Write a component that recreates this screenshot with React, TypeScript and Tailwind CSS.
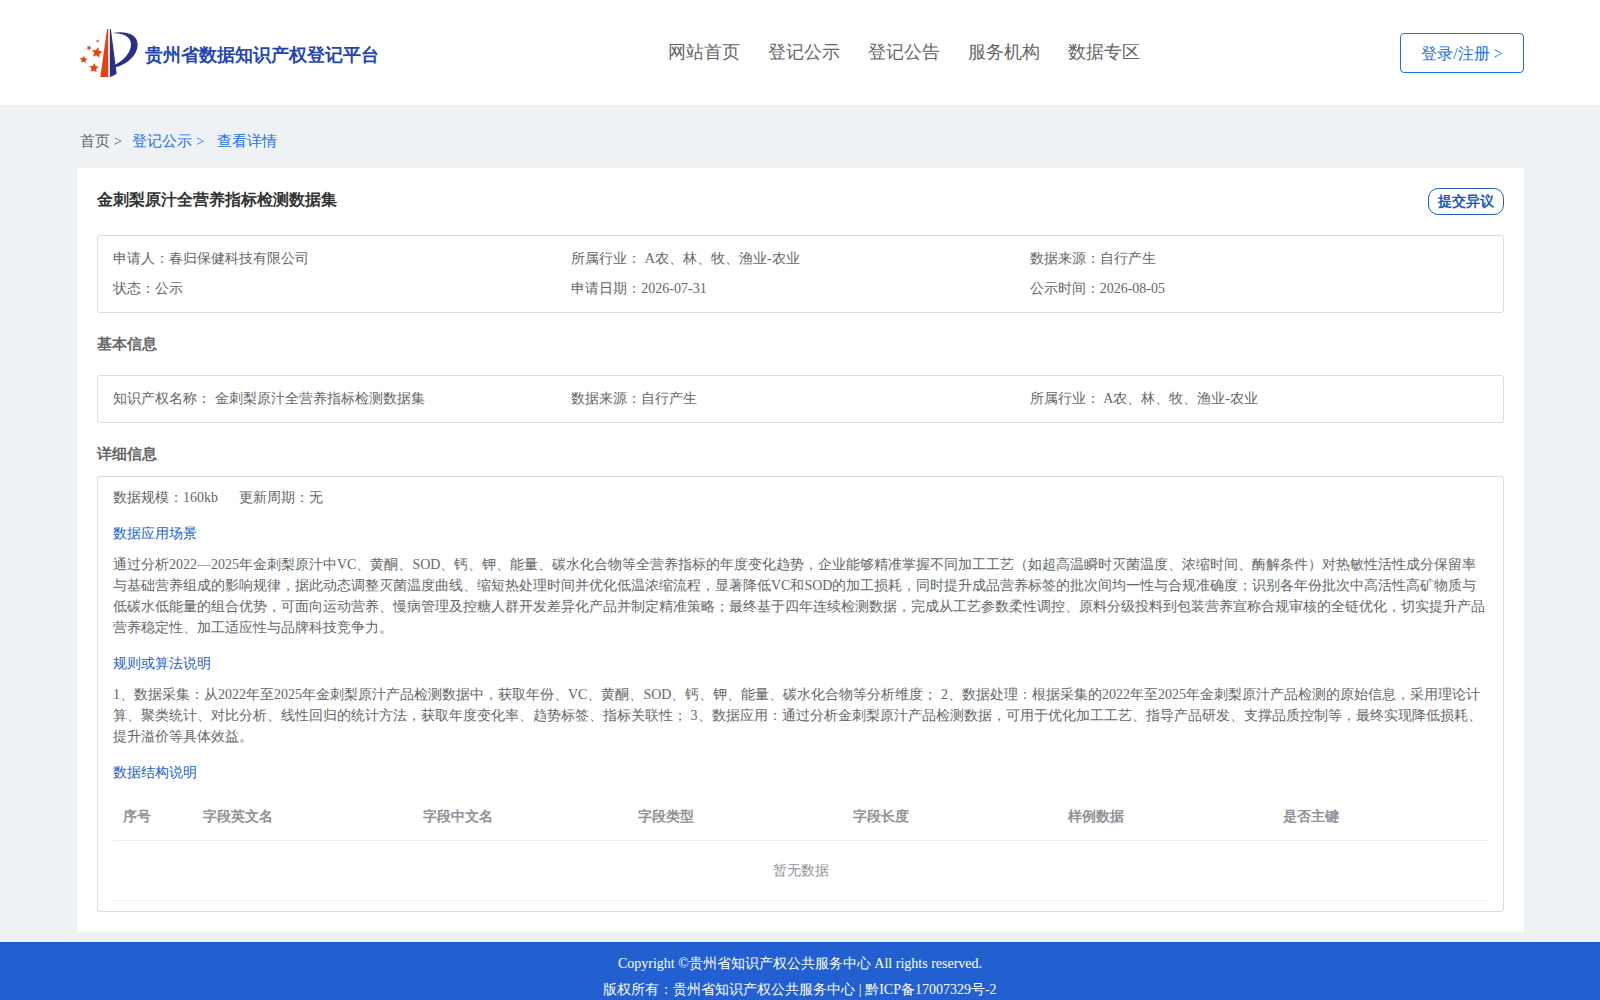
const FONT = "font-['Liberation_Serif',serif]";

const navItems = ['网站首页', '登记公示', '登记公告', '服务机构', '数据专区'];

const summary = [
  '申请人：春归保健科技有限公司',
  '所属行业： A农、林、牧、渔业-农业',
  '数据来源：自行产生',
  '状态：公示',
  '申请日期：2026-07-31',
  '公示时间：2026-08-05',
];

const basics = [
  '知识产权名称： 金刺梨原汁全营养指标检测数据集',
  '数据来源：自行产生',
  '所属行业： A农、林、牧、渔业-农业',
];

const columns = ['序号', '字段英文名', '字段中文名', '字段类型', '字段长度', '样例数据', '是否主键'];

function star(cx: number, cy: number, r: number, turn: number) {
  return Array.from({ length: 10 }, (_, i) => {
    const radius = i % 2 ? r * 0.48 : r;
    const a = ((i * 36 - 90 + turn) * Math.PI) / 180;
    return `${(cx + radius * Math.cos(a)).toFixed(1)},${(cy + radius * Math.sin(a)).toFixed(1)}`;
  }).join(' ');
}

function Logo() {
  return (
    <svg viewBox="30 24 174 150" className="h-[50px] w-[58px] shrink-0" aria-hidden="true">
      <g fill="#e64312">
        <path d="M111 27 L114.500 27 L114.500 171 L91 171 Z" />
        <polygon points={star(81, 98, 17, 12)} />
        <polygon points={star(72, 144, 15, 5)} />
        <polygon points={star(41, 119, 12, 5)} />
        <polygon points={star(57, 84, 8, 20)} />
        <polygon points={star(83, 63, 5, 20)} />
      </g>
      <g fill="#2a3088">
        <path d="M119.500 27 L122.500 27 L140 161 Q130 168 119.500 171 Z" />
        <path d="M127 39 C165 31 204 42 203 74 C202 108 168 134 136 142 L135 134 C160 122 184 98 183 72 C182 49 158 39 127 39 Z" />
      </g>
    </svg>
  );
}

function InfoBox({ items }: { items: string[] }) {
  return (
    <ul className="grid grid-cols-3 rounded-[3px] border border-[#dcdcdc] px-[15px] py-2 text-sm leading-[30px]">
      {items.map((item) => (
        <li key={item}>{item}</li>
      ))}
    </ul>
  );
}

function SubHeading({ children }: { children: string }) {
  return <h3 className="mt-[15px] mb-2.5 text-[#2260d2]">{children}</h3>;
}

export default function App() {
  return (
    <div className={`min-h-screen bg-[#eef2f5] text-[#666] ${FONT}`}>
      <header className="bg-white">
        <div className="mr-[76px] ml-[77px] flex h-[105px] items-center justify-between">
          <a href="#" className="flex w-[331px] items-center gap-[7px] pl-[3px] text-lg font-bold text-[#2446b4]">
            <Logo />
            <span className="whitespace-nowrap pt-1">贵州省数据知识产权登记平台</span>
          </a>
          <nav className="flex gap-7 pb-0.5 text-lg">
            {navItems.map((item) => (
              <a key={item} href="#">{item}</a>
            ))}
          </nav>
          <button type="button" className="h-10 w-[124px] rounded-[4px] border border-[#1a70ef] pt-0.5 text-base text-[#1a70ef]">
            登录/注册 &gt;
          </button>
        </div>
      </header>

      <main className="mr-[76px] ml-[77px]">
        <nav aria-label="breadcrumb" className="flex h-[63px] items-center pt-2.5 pl-[3px] text-[15px]">
          <a href="#" className="mr-2.5">首页 &gt;</a>
          <a href="#" className="mr-[13px] text-[#1a70ef]">登记公示 &gt;</a>
          <span className="text-[#1a70ef]">查看详情</span>
        </nav>

        <section className="bg-white p-5">
          <div className="mb-5 flex items-start justify-between">
            <h1 className="text-base leading-6 font-bold text-[#333]">金刺梨原汁全营养指标检测数据集</h1>
            <button type="button" className="h-[27px] rounded-[10px] border border-[#2260c4] px-[9px] text-sm font-bold text-[#2058be]">
              提交异议
            </button>
          </div>

          <InfoBox items={summary} />
          <h2 className="py-5 text-[15px] leading-[22px] font-bold">基本信息</h2>
          <InfoBox items={basics} />
          <h2 className="pt-5 pb-2.5 text-[15px] leading-[23px] font-bold">详细信息</h2>

          <div className="rounded-[3px] border border-[#dcdcdc] px-[15px] py-2.5 text-sm leading-[21px]">
            <p className="flex gap-[21px]">
              <span>数据规模：160kb</span>
              <span>更新周期：无</span>
            </p>
            <SubHeading>数据应用场景</SubHeading>
            <p>
              通过分析2022—2025年金刺梨原汁中VC、黄酮、SOD、钙、钾、能量、碳水化合物等全营养指标的年度变化趋势，企业能够精准掌握不同加工工艺（如超高温瞬时灭菌温度、浓缩时间、酶解条件）对热敏性活性成分保留率与基础营养组成的影响规律，据此动态调整灭菌温度曲线、缩短热处理时间并优化低温浓缩流程，显著降低VC和SOD的加工损耗，同时提升成品营养标签的批次间均一性与合规准确度；识别各年份批次中高活性高矿物质与低碳水低能量的组合优势，可面向运动营养、慢病管理及控糖人群开发差异化产品并制定精准策略；最终基于四年连续检测数据，完成从工艺参数柔性调控、原料分级投料到包装营养宣称合规审核的全链优化，切实提升产品营养稳定性、加工适应性与品牌科技竞争力。
            </p>
            <SubHeading>规则或算法说明</SubHeading>
            <p>
              1、数据采集：从2022年至2025年金刺梨原汁产品检测数据中，获取年份、VC、黄酮、SOD、钙、钾、能量、碳水化合物等分析维度； 2、数据处理：根据采集的2022年至2025年金刺梨原汁产品检测的原始信息，采用理论计算、聚类统计、对比分析、线性回归的统计方法，获取年度变化率、趋势标签、指标关联性； 3、数据应用：通过分析金刺梨原汁产品检测数据，可用于优化加工工艺、指导产品研发、支撑品质控制等，最终实现降低损耗、提升溢价等具体效益。
            </p>
            <SubHeading>数据结构说明</SubHeading>
            <table className="w-full table-fixed text-left text-[#909399]">
              <colgroup>
                <col className="w-20" />
                <col className="w-[220px]" />
                <col />
                <col />
                <col />
                <col />
                <col />
              </colgroup>
              <thead>
                <tr className="h-[47px] border-b border-[#ebeef5]">
                  {columns.map((column) => (
                    <th key={column} scope="col" className="px-2.5 font-bold">{column}</th>
                  ))}
                </tr>
              </thead>
              <tbody>
                <tr className="h-[60px] border-b border-[#ebeef5]">
                  <td colSpan={7} className="text-center">暂无数据</td>
                </tr>
              </tbody>
            </table>
          </div>
        </section>
      </main>

      <footer className="mt-2.5 bg-[#2260d2] pt-[9px] text-center text-sm leading-[26px] text-white">
        <p>Copyright ©贵州省知识产权公共服务中心 All rights reserved.</p>
        <p>
          版权所有：贵州省知识产权公共服务中心 | <a href="#">黔ICP备17007329号-2</a>
        </p>
      </footer>
    </div>
  );
}
